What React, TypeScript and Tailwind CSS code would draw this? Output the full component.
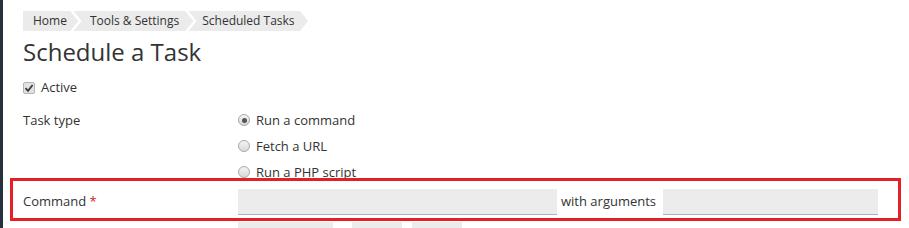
import React from "react";

function Sep() {
  return (
    <svg width="12" height="20" viewBox="0 0 12 20" className="block shrink-0">
      <rect x="0" y="0" width="12" height="20" fill="#ebebeb" />
      <polyline points="1,-1 10,10 1,21" fill="none" stroke="#ffffff" strokeWidth="2.5" />
    </svg>
  );
}

function Radio({ checked }: { checked?: boolean }) {
  return (
    <span className="relative inline-flex h-[12px] w-[12px] shrink-0 items-center justify-center rounded-full border border-[#a8a8a8] bg-gradient-to-b from-[#f4f4f4] to-[#d9d9d9]">
      {checked && <span className="block h-[5px] w-[5px] rounded-full bg-[#555555]" />}
    </span>
  );
}

export default function App() {
  return (
    <div
      className="relative flex h-[228px] w-[909px] overflow-hidden bg-white text-[#333333]"
      style={{ fontFamily: "'Open Sans', 'Liberation Sans', sans-serif" }}
    >
      <div className="w-[3px] shrink-0 bg-[#25313b]" />
      <div className="flex min-w-0 flex-1 flex-col">
        <div className="h-[2px] bg-[#25313b]" />
        <div className="flex flex-col pl-[20px]">
          {/* breadcrumb */}
          <div className="mt-[11px] flex h-[20px] items-center text-[12px] leading-[20px]">
            <span className="h-[20px] bg-[#ebebeb] pl-[10px] pr-[3px]">Home</span>
            <Sep />
            <span className="h-[20px] bg-[#ebebeb] pl-[8px] pr-[6px]">Tools &amp; Settings</span>
            <Sep />
            <span className="h-[20px] bg-[#ebebeb] pl-[5px] pr-[5px]">Scheduled Tasks</span>
            <svg width="8" height="20" viewBox="0 0 8 20" className="block shrink-0">
              <polygon points="0,0 8,10 0,20" fill="#ebebeb" />
            </svg>
          </div>

          <h1 className="mt-[5px] text-[24px] font-normal leading-[32px] text-[#333333]">Schedule a Task</h1>

          {/* active */}
          <div className="mt-[10px] flex h-[20px] items-center gap-[6px] text-[13px]">
            <span className="flex h-[12px] w-[12px] items-center justify-center rounded-[2px] border border-[#b5b5b5] bg-[#e2e2e2]">
              <svg width="10" height="10" viewBox="0 0 10 10">
                <polyline points="1.5,5.2 4,7.8 8.6,2" fill="none" stroke="#3a3a3a" strokeWidth="1.8" />
              </svg>
            </span>
            <span>Active</span>
          </div>

          {/* task type */}
          <div className="mt-[14px] flex text-[13px] leading-[16px]">
            <div className="w-[215px] shrink-0">Task type</div>
            <div className="flex flex-col gap-[10px]">
              <label className="flex h-[16px] items-center gap-[6px]">
                <Radio checked />
                <span>Run a command</span>
              </label>
              <label className="flex h-[16px] items-center gap-[6px]">
                <Radio />
                <span>Fetch a URL</span>
              </label>
              <label className="flex h-[16px] items-center gap-[6px]">
                <Radio />
                <span>Run a PHP script</span>
              </label>
            </div>
          </div>

          {/* command row with red annotation */}
          <div className="relative z-10 ml-[-13px] mt-[-2px] flex w-[891px] items-center border-[3px] border-[#e51f26] bg-white pb-[3px] pl-[10px] pt-[8px] text-[13px]">
            <div className="w-[215px] shrink-0">
              Command <span className="text-[#d9151c]">*</span>
            </div>
            <div className="h-[26px] w-[319px] border-b border-[#aab3ba] bg-[#ececec]" />
            <span className="ml-[4px] mr-[7px]">with arguments</span>
            <div className="h-[26px] w-[215px] border-b border-[#aab3ba] bg-[#ececec]" />
          </div>

          <div className="ml-[215px] mt-[1px] flex">
            <div className="h-[20px] w-[95px] bg-[#ececec]" />
            <div className="ml-[19px] h-[20px] w-[50px] bg-[#ececec]" />
            <div className="ml-[10px] h-[20px] w-[50px] bg-[#ececec]" />
          </div>
        </div>
      </div>
    </div>
  );
}
